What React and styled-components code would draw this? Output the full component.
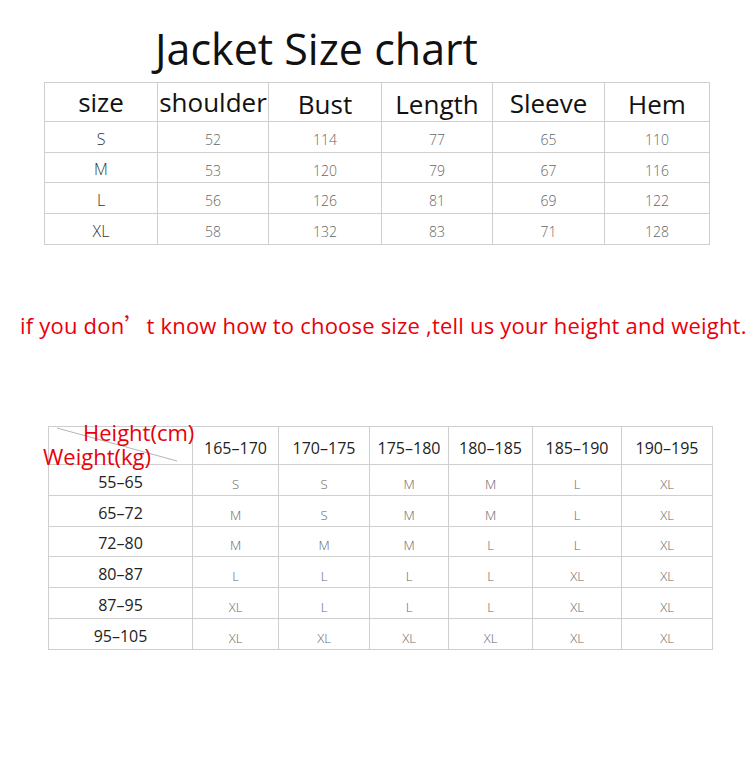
import { createGlobalStyle, styled } from "styled-components";

const GlobalStyle = createGlobalStyle`
  body {
    margin: 0;
    background: #fff;
    font-family: "Open Sans", "Noto Sans", sans-serif;
  }
`;

const Page = styled.div`
  width: 750px;
  height: 778px;
  background: #fff;
  display: flex;
  flex-direction: column;
  overflow: hidden;
`;

const Title = styled.h1`
  margin: 20px 0 0 155px;
  height: 62px;
  font-size: 43px;
  font-weight: 400;
  line-height: 58px;
  color: #111;
`;

const Grid = styled.div`
  display: grid;
  grid-template-columns: ${(p) => p.$cols};
  grid-template-rows: ${(p) => p.$rows};
  gap: 1px;
  padding: 1px;
  background: #cfcfcf;
  margin-left: ${(p) => p.$left}px;
  width: max-content;
`;

const HeadCell = styled.div`
  background: #fff;
  display: flex;
  justify-content: center;
  align-items: flex-end;
  font-size: 26px;
  color: #111;
  white-space: nowrap;
  line-height: 34px;
  padding-bottom: ${(p) => p.$drop ?? 0}px;
`;

const Cell = styled.div`
  background: #fff;
  display: flex;
  justify-content: center;
  align-items: center;
  padding-top: 5px;
  font-size: 14px;
  color: #666;
  font-weight: 300;
`;

const SizeCell = styled(Cell)`
  font-size: 16px;
  color: #333;
  padding-top: 3px;
`;

const Notice = styled.p`
  margin: 65px 0 0 20px;
  font-family: "Open Sans", sans-serif;
  font-size: 22px;
  color: #e8000b;
  white-space: nowrap;
  letter-spacing: 0.2px;
  line-height: 28px;
`;

const Apos = styled.span`
  font-family: "Noto Sans CJK SC", sans-serif;
`;

const FitGrid = styled(Grid)`
  margin-top: 87px;
`;

const Corner = styled.div`
  background: #fff;
  position: relative;
`;

const Diagonal = styled.svg`
  position: absolute;
  left: 0;
  top: 0;
`;

const AxisLabel = styled.span`
  position: absolute;
  left: ${(p) => p.$x}px;
  top: ${(p) => p.$y}px;
  font-size: 22px;
  line-height: 26px;
  color: #e8000b;
  white-space: nowrap;
`;

const RangeHead = styled.div`
  background: #fff;
  display: flex;
  justify-content: center;
  align-items: center;
  padding-top: 5px;
  font-size: 16px;
  color: #222;
`;

const RangeLabel = styled(RangeHead)`
  padding-top: 3px;
`;

const FitCell = styled(Cell)`
  font-size: 13px;
  padding-top: 7px;
`;

const headers = [
  ["size", 2],
  ["shoulder", 2],
  ["Bust", 0],
  ["Length", 0],
  ["Sleeve", 1],
  ["Hem", -2],
];

const sizes = [
  ["S", 52, 114, 77, 65, 110],
  ["M", 53, 120, 79, 67, 116],
  ["L", 56, 126, 81, 69, 122],
  ["XL", 58, 132, 83, 71, 128],
];

const heights = ["165–170", "170–175", "175–180", "180–185", "185–190", "190–195"];

const fits = [
  ["55–65", "S", "S", "M", "M", "L", "XL"],
  ["65–72", "M", "S", "M", "M", "L", "XL"],
  ["72–80", "M", "M", "M", "L", "L", "XL"],
  ["80–87", "L", "L", "L", "L", "XL", "XL"],
  ["87–95", "XL", "L", "L", "L", "XL", "XL"],
  ["95–105", "XL", "XL", "XL", "XL", "XL", "XL"],
];

export default function App() {
  return (
    <Page>
      <GlobalStyle />
      <Title>Jacket Size chart</Title>

      <Grid
        $left={44}
        $cols="112px 110px 112px 110px 111px 104px"
        $rows="38px 30px 29px 30px 30px"
      >
        {headers.map(([h, d]) => (
          <HeadCell key={h} $drop={d}>
            {h}
          </HeadCell>
        ))}
        {sizes.map((row) =>
          row.map((v, i) =>
            i === 0 ? (
              <SizeCell key={row[0]}>{v}</SizeCell>
            ) : (
              <Cell key={row[0] + i}>{v}</Cell>
            )
          )
        )}
      </Grid>

      <Notice>
        if you don<Apos>’</Apos>t know how to choose size ,tell us your height and weight.
      </Notice>

      <FitGrid
        $left={48}
        $cols="143px 85px 90px 78px 83px 88px 90px"
        $rows="37px 30px 30px 29px 30px 30px 30px"
      >
        <Corner>
          <Diagonal width="143" height="37">
            <line x1="8" y1="1" x2="128" y2="34" stroke="#b5b5b5" strokeWidth="1" />
          </Diagonal>
          <AxisLabel $x={34} $y={-8}>Height(cm)</AxisLabel>
          <AxisLabel $x={-6} $y={16}>Weight(kg)</AxisLabel>
        </Corner>
        {heights.map((h) => (
          <RangeHead key={h}>{h}</RangeHead>
        ))}
        {fits.map((row) =>
          row.map((v, i) =>
            i === 0 ? (
              <RangeLabel key={row[0]}>{v}</RangeLabel>
            ) : (
              <FitCell key={row[0] + i}>{v}</FitCell>
            )
          )
        )}
      </FitGrid>
    </Page>
  );
}
